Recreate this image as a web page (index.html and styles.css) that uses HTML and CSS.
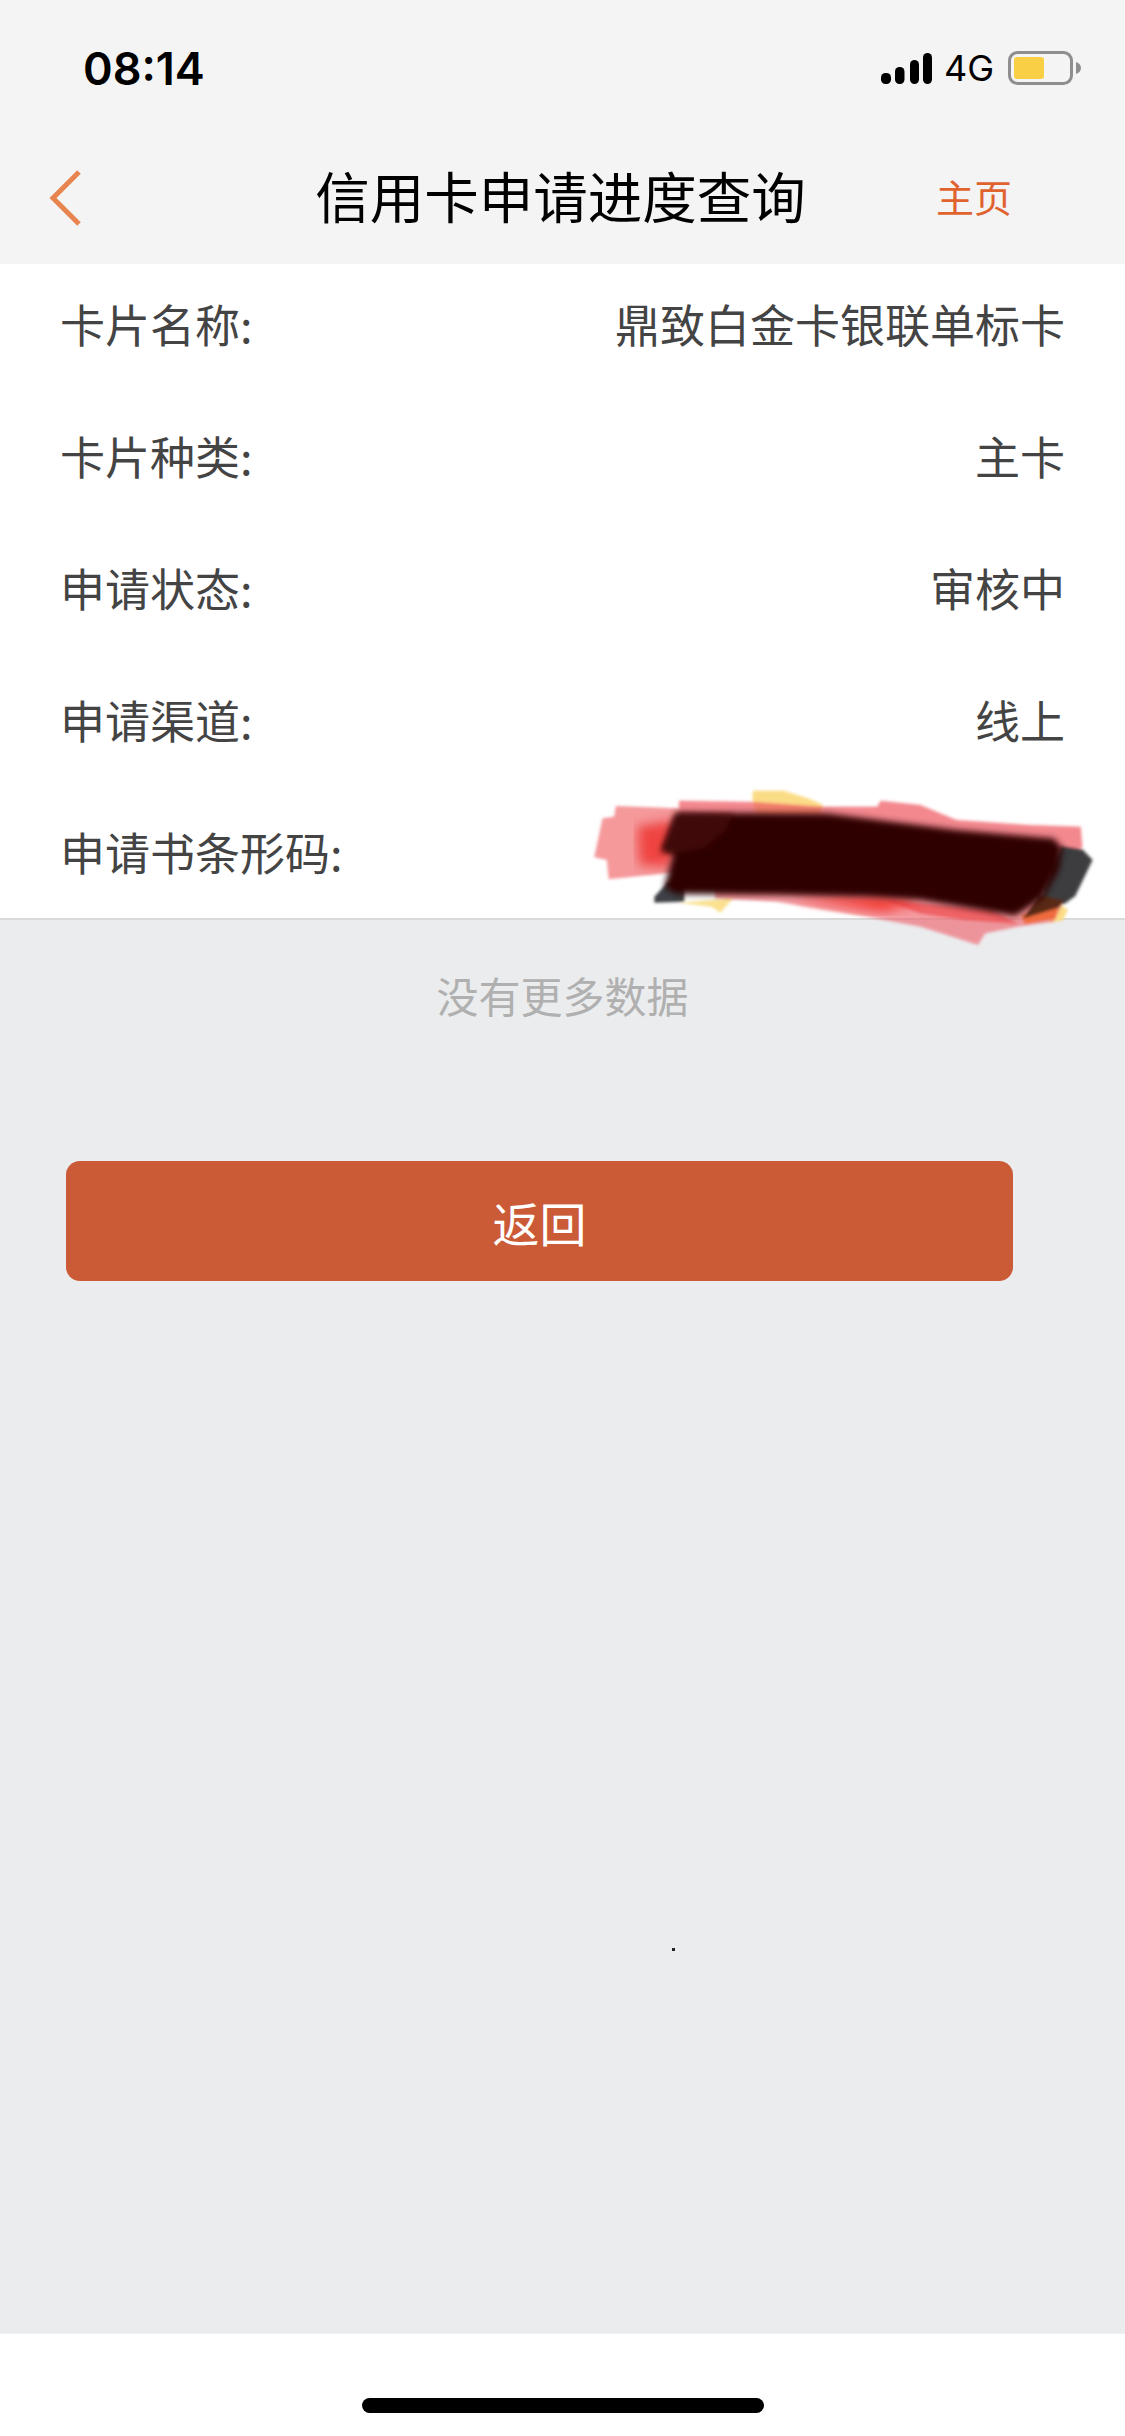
FILE: index.html
```html
<!DOCTYPE html>
<html lang="zh-CN">
<head>
<meta charset="utf-8">
<title>信用卡申请进度查询</title>
<link rel="stylesheet" href="styles.css">
</head>
<body>
<div class="page">
  <header class="top">
    <div class="status">
      <span class="time">08:14</span>
      <div class="status-right">
        <svg class="signal" width="51" height="31" viewBox="0 0 51 31"><rect x="0" y="20" width="10" height="11" rx="4.5"/><rect x="14" y="14" width="9.5" height="17" rx="4.5"/><rect x="29" y="7" width="9" height="24" rx="4.5"/><rect x="42" y="0" width="9" height="31" rx="4.5"/></svg>
        <span class="net">4G</span>
        <svg class="battery" width="73" height="34" viewBox="0 0 73 34"><rect x="1.5" y="1.5" width="62" height="31" rx="8" fill="none" stroke="#8e8e8e" stroke-width="3"/><rect x="6" y="6" width="30" height="22" rx="3" fill="#f9cf45"/><path d="M68 11c3 1 5 3 5 6s-2 5-5 6z" fill="#8e8e8e"/></svg>
      </div>
    </div>
    <nav class="nav">
      <svg class="back" width="34" height="56" viewBox="0 0 34 56"><path d="M30 2 4 28l26 26" fill="none" stroke="#e8844f" stroke-width="5"/></svg>
      <h1 class="title">信用卡申请进度查询</h1>
      <a class="home-link">主页</a>
    </nav>
  </header>

  <main class="content">
    <section class="list">
      <div class="row"><span>卡片名称:</span><span>鼎致白金卡银联单标卡</span></div>
      <div class="row"><span>卡片种类:</span><span>主卡</span></div>
      <div class="row"><span>申请状态:</span><span>审核中</span></div>
      <div class="row"><span>申请渠道:</span><span>线上</span></div>
      <div class="row"><span>申请书条形码:</span><span></span></div>
    </section>
    <p class="nomore">没有更多数据</p>
    <button class="return" type="button">返回</button>
  </main>

  <footer class="homebar"><span class="indicator"></span></footer>

  <svg class="scribble" width="565" height="190" viewBox="0 0 1568 570" preserveAspectRatio="none">
    <defs>
      <filter id="soft" x="-5%" y="-15%" width="110%" height="130%"><feGaussianBlur stdDeviation="5"/></filter>
      <filter id="softer" x="-5%" y="-15%" width="110%" height="130%"><feGaussianBlur stdDeviation="9"/></filter>
      <filter id="wide" x="-10%" y="-25%" width="120%" height="150%"><feGaussianBlur stdDeviation="16"/></filter>
    </defs>
    <g filter="url(#soft)">
      <path d="M535 62 620 62 690 85 730 105 720 135 545 135Q530 90 535 62Z" fill="#fbdc86"/>
      <path d="M330 398 480 385 445 428 420 410Z" fill="#fbe08e"/>
      <path d="M1380 400 1410 418 1395 452 1355 458Z" fill="#fbdc86"/>
      <path d="M155 108 330 115 335 305 135 328 130 270 95 262 118 145 150 140Z" fill="#f0686c" opacity=".68"/>
      <path d="M330 92 540 96 730 110 880 110 890 92 1000 105 1100 150 1300 165 1445 170 1450 232 1400 245 1000 210 330 145Z" fill="#ef5a62" opacity=".72"/>
      <path d="M430 385 600 395 850 440 1000 470 1060 490 1160 525 1180 490 1270 470 1370 455 1395 400 1000 350 430 350Z" fill="#ee666e" opacity=".65"/>
      <path d="M900 390 1200 420 1270 462 1120 450 1000 430Z" fill="#ee5358" opacity=".8"/>
      <path d="M1280 435 1385 395 1375 445 1290 462Z" fill="#ef6a3c"/>
      <path d="M1390 228 1450 238 1478 270 1430 378 1400 402 1330 395Z" fill="#3c3d3f"/>
      <path d="M300 335 345 345 345 395 262 398 262 380Z" fill="#3d4045"/>
      <path d="M1330 375 1400 392 1385 412 1285 445Z" fill="#5a2a14"/>
    </g>
    <path filter="url(#wide)" d="M215 170 320 150 310 290 220 285Z" fill="#ee3530" opacity=".85"/>
    <path filter="url(#wide)" d="M640 385 880 380 1000 395 900 425 780 405Z" fill="#f4261a" opacity=".85"/>
    <path filter="url(#softer)" d="M330 128 740 130 1100 180 1370 205 1395 235 1385 300 1340 385 1262 438 1000 390 850 380 600 375 320 372 290 350 315 250 280 245 320 130Z" fill="#2f0503"/>
    <path filter="url(#softer)" d="M330 132 480 134 460 180 400 235 318 250 285 240 322 135Z" fill="#4a0c10" opacity=".7"/>
  </svg>
  <span class="speck"></span>
</div>
</body>
</html>
```

FILE: styles.css
```css
* { box-sizing: border-box; }
html, body { margin: 0; padding: 0; }
body {
  width: 1125px;
  height: 2436px;
  overflow: hidden;
  font-family: "Noto Sans CJK SC", "Liberation Sans", sans-serif;
}
.page {
  position: relative;
  display: flex;
  flex-direction: column;
  width: 1125px;
  height: 2436px;
  background: #ebecee;
}
.top { height: 264px; background: #f4f4f4; }
.status {
  display: flex;
  align-items: center;
  justify-content: space-between;
  height: 136px;
  padding: 0 44px 0 83px;
}
.time {
  font-family: Inter, "Liberation Sans", sans-serif;
  font-size: 45px;
  font-weight: 600;
  color: #000;
}
.status-right { display: flex; align-items: center; }
.signal { fill: #000; margin-right: 12px; }
.net {
  font-family: Inter, "Liberation Sans", sans-serif;
  font-size: 36px;
  font-weight: 400;
  color: #000;
  margin-right: 14px;
}
.nav {
  display: grid;
  grid-template-columns: 1fr auto 1fr;
  align-items: center;
  height: 124px;
  padding: 0 48px;
}
.back { justify-self: start; margin-left: 1px; }
.title {
  margin: 0 0 6px -4px;
  font-size: 54.5px;
  line-height: 70px;
  font-weight: 400;
  color: #000;
}
.home-link {
  justify-self: end;
  margin: 0 65px 4px 0;
  font-size: 38px;
  line-height: 50px;
  color: #e0622f;
}
.content { flex: 1; }
.list {
  display: flex;
  flex-direction: column;
  gap: 8px;
  padding-bottom: 2px;
  background: #fff;
  border-bottom: 2px solid #d9d9d9;
}
.row {
  display: flex;
  align-items: center;
  justify-content: space-between;
  height: 124px;
  padding: 0 60px 6px 60px;
  font-size: 45px;
  color: #444;
}
.nomore {
  margin: 0;
  padding-top: 46px;
  font-size: 42px;
  line-height: 58px;
  text-align: center;
  color: #b0b0b0;
}
.return {
  display: block;
  width: 947px;
  height: 120px;
  margin: 137px 0 0 66px;
  padding: 0;
  border: 0;
  border-radius: 14px;
  background: #cb5a36;
  color: #fff;
  font-family: inherit;
  font-size: 47px;
}
.homebar {
  display: flex;
  justify-content: center;
  height: 103px;
  padding-top: 64px;
  background: #fff;
  border-top: 1px solid #f1f1f3;
}
.indicator {
  display: block;
  width: 402px;
  height: 15px;
  border-radius: 8px;
  background: #000;
}
.scribble { position: absolute; left: 560px; top: 770px; }
.speck {
  position: absolute;
  left: 672px;
  top: 1948px;
  width: 3px;
  height: 3px;
  background: #222;
}
```
